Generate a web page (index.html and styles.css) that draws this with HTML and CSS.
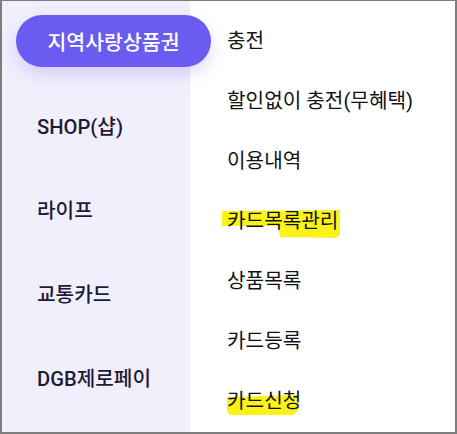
FILE: index.html
```html
<!DOCTYPE html>
<html lang="ko">
<head>
<meta charset="utf-8">
<link rel="stylesheet" href="styles.css">
</head>
<body>
<div class="frame">
  <nav class="side">
    <div class="pill">지역사랑상품권</div>
    <div class="side-item">SHOP(샵)</div>
    <div class="side-item">라이프</div>
    <div class="side-item">교통카드</div>
    <div class="side-item">DGB제로페이</div>
  </nav>
  <ul class="menu">
    <li class="menu-item"><span>충전</span></li>
    <li class="menu-item"><span>할인없이 충전(무혜택)</span></li>
    <li class="menu-item"><span>이용내역</span></li>
    <li class="menu-item"><span class="mark mark-a">카드목록관리</span></li>
    <li class="menu-item"><span>상품목록</span></li>
    <li class="menu-item"><span>카드등록</span></li>
    <li class="menu-item"><span class="mark mark-b">카드신청</span></li>
  </ul>
</div>
</body>
</html>
```

FILE: styles.css
```css
* { box-sizing: border-box; }
html, body { margin: 0; padding: 0; background: #fff; }
body { font-family: Roboto, "Noto Sans CJK KR", sans-serif; }

.frame {
  width: 457px;
  height: 434px;
  border: 2px solid #7d7d7d;
  border-top-width: 1px;
  display: flex;
  overflow: hidden;
  background: #fff;
}

.side {
  width: 188px;
  flex: none;
  background: #f1effc;
  padding-top: 14px;
  position: relative;
  z-index: 2;
}

.pill {
  width: 195px;
  height: 52px;
  margin-left: 14px;
  border-radius: 26px;
  background: #6b5cf1;
  color: #fff;
  font-size: 20.5px;
  font-weight: 500;
  display: flex;
  align-items: center;
  justify-content: center;
  box-shadow: 0 7px 16px rgba(107, 92, 241, 0.22);
  margin-bottom: 16px;
}

.side-item {
  height: 84px;
  display: flex;
  align-items: center;
  padding-left: 35px;
  font-size: 20.2px;
  font-weight: 500;
  color: #1d1b3a;
}

.menu {
  list-style: none;
  margin: 0;
  padding: 10px 0 0 37px;
  flex: 1;
  isolation: isolate;
}

.menu-item {
  height: 60px;
  display: flex;
  align-items: center;
  font-size: 20.2px;
  color: #121212;
}

.menu-item span {
  line-height: 26px;
  position: relative;
}

.mark::before {
  content: "";
  position: absolute;
  background: #fbf21a;
  z-index: -1;
}

.mark-a::before {
  left: -5px;
  top: 2px;
  width: 118px;
  height: 28px;
  clip-path: polygon(0 1px, 118px 0, 118px 25px, 113px 28px, 58px 27px, 56px 16px, 0 16px);
}

.mark-b::before {
  left: 0;
  top: 7px;
  width: 71px;
  height: 20px;
  clip-path: polygon(0 2px, 71px 0, 71px 16px, 66px 20px, 3px 20px, 0 17px);
}
```
